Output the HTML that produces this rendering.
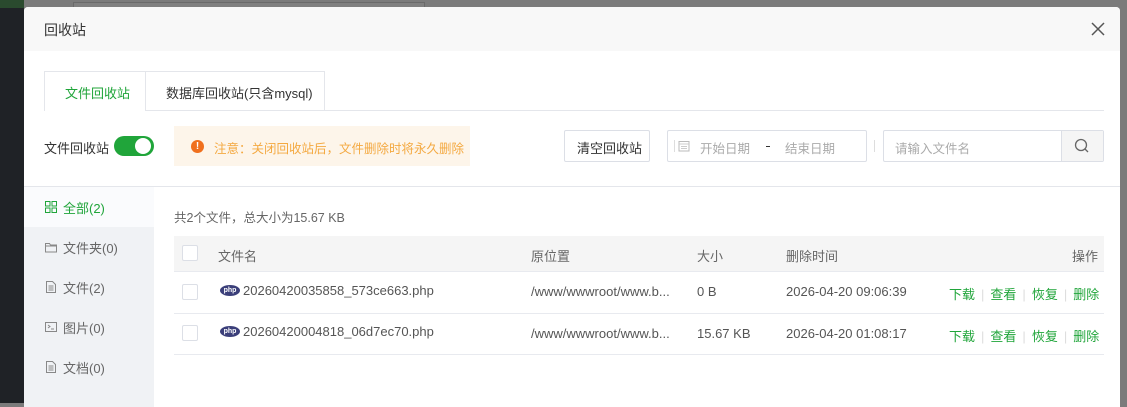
<!DOCTYPE html>
<html><head><meta charset="utf-8"><style>
*{margin:0;padding:0;box-sizing:border-box}
body{width:1127px;height:403px;overflow:hidden;background:#7b7b7b;font-family:"Liberation Sans","Noto Sans CJK SC",sans-serif;font-size:13px;color:#555;position:relative}
.abs{position:absolute}
.dlg{left:24px;top:7px;width:1096px;height:400px;background:#fff;border-radius:4px 4px 0 0;overflow:hidden}
.t{white-space:nowrap}
.sb{font-size:13px;color:#666}
.sep{color:#ddd;margin:0 6px}
</style></head><body>
<div class="abs" style="left:0;top:0;width:24px;height:403px;background:#1f2226"></div>
<div class="abs" style="left:0;top:0;width:24px;height:8px;background:#2a4a2e"></div>
<div class="abs" style="left:73px;top:2px;width:352px;height:6px;border:1px solid #6a6a6a;border-bottom:none;background:#808080"></div>
<div class="abs dlg">
  <div class="abs" style="left:0;top:0;width:1096px;height:44px;background:#f8f8f8"></div>
  <div class="abs t" style="left:20px;top:13px;font-size:14px;color:#333">回收站</div>
  <svg class="abs" style="left:1067px;top:15px" width="14" height="14" viewBox="0 0 14 14"><path d="M1 1L13 13M13 1L1 13" stroke="#555" stroke-width="1.5"/></svg>
  <div class="abs" style="left:20px;top:103px;width:1060px;height:1px;background:#e4e6eb"></div>
  <div class="abs" style="left:20px;top:64px;width:102px;height:40px;border:1px solid #e4e6eb;border-bottom:none;background:#fff"></div>
  <div class="abs" style="left:121px;top:64px;width:180px;height:40px;border:1px solid #e4e6eb;border-bottom:none"></div>
  <div class="abs t" style="left:41px;top:76px;font-size:13px;color:#20a53a">文件回收站</div>
  <div class="abs t" style="left:142px;top:76px;font-size:13px;color:#333">数据库回收站(只含mysql)</div>
  <div class="abs t" style="left:20px;top:131px;font-size:13px;color:#333">文件回收站</div>
  <div class="abs" style="left:90px;top:129px;width:40px;height:20px;border-radius:10px;background:#20a53a"></div>
  <div class="abs" style="left:111px;top:131px;width:16px;height:16px;border-radius:50%;background:#fff"></div>
  <div class="abs" style="left:150px;top:119px;width:296px;height:40px;background:#fdf5ea"></div>
  <div class="abs" style="left:167px;top:133px;width:13px;height:13px;border-radius:50%;background:#f0701e;color:#fff;font-size:10px;font-weight:bold;text-align:center;line-height:13px">!</div>
  <div class="abs t" style="left:190px;top:131px;font-size:12.5px;color:#f4a941">注意：关闭回收站后，文件删除时将永久删除</div>
  <div class="abs" style="left:540px;top:123px;width:86px;height:32px;border:1px solid #dcdfe6;border-radius:2px"></div>
  <div class="abs t" style="left:553px;top:131px;font-size:13px;color:#333">清空回收站</div>
  <div class="abs" style="left:650px;top:133px;width:1px;height:12px;background:#ddd"></div>
  <div class="abs" style="left:643px;top:123px;width:200px;height:32px;border:1px solid #dcdfe6;border-radius:2px"></div>
  <svg class="abs" style="left:654px;top:133px" width="12" height="12" viewBox="0 0 12 12"><rect x="1" y="1.5" width="10" height="9.5" fill="none" stroke="#bbb"/><path d="M1 4h10M3 6.5h6M3 8.5h6" stroke="#ccc"/></svg>
  <div class="abs t" style="left:676px;top:131px;font-size:12.5px;color:#aaa">开始日期</div>
  <div class="abs" style="left:742px;top:139px;width:4px;height:1px;background:#333"></div>
  <div class="abs t" style="left:761px;top:131px;font-size:12.5px;color:#aaa">结束日期</div>
  <div class="abs" style="left:850px;top:133px;width:1px;height:12px;background:#ddd"></div>
  <div class="abs" style="left:859px;top:123px;width:221px;height:32px;border:1px solid #dcdfe6;border-radius:2px"></div>
  <div class="abs" style="left:1037px;top:124px;width:42px;height:30px;background:#f5f5f5;border-left:1px solid #dcdfe6"></div>
  <svg class="abs" style="left:1050px;top:131px" width="16" height="16" viewBox="0 0 16 16"><circle cx="7" cy="7" r="5.5" fill="none" stroke="#666" stroke-width="1.3"/><path d="M11 11l3 3" stroke="#666" stroke-width="1.3"/></svg>
  <div class="abs t" style="left:871px;top:131px;font-size:12.5px;color:#aaa">请输入文件名</div>
  <div class="abs" style="left:0;top:179px;width:1096px;height:1px;background:#e4e6eb"></div>
  <div class="abs" style="left:0;top:180px;width:130px;height:220px;background:#f0f2f5"></div>
  <div class="abs" style="left:0;top:180px;width:130px;height:40px;background:#fafbfd"></div>
  <svg class="abs" style="left:21px;top:194px" width="12" height="12" viewBox="0 0 12 12" fill="none" stroke="#20a53a"><rect x=".5" y=".5" width="4.5" height="4.5"/><rect x="7" y=".5" width="4.5" height="4.5"/><rect x=".5" y="7" width="4.5" height="4.5"/><rect x="7" y="7" width="4.5" height="4.5"/></svg>
  <div class="abs t" style="left:39px;top:191px;font-size:13px;color:#20a53a">全部(2)</div>
  <svg class="abs" style="left:21px;top:234px" width="12" height="12" viewBox="0 0 12 12" fill="none" stroke="#888"><path d="M.5 2.5h4l1 1.5h6v7h-11z M.5 5h11"/></svg>
  <div class="abs t sb" style="left:39px;top:231px">文件夹(0)</div>
  <svg class="abs" style="left:21px;top:274px" width="12" height="12" viewBox="0 0 12 12" fill="none" stroke="#888"><path d="M1.5.5h6l3 3v8h-9z M3.5 5h5M3.5 7h5M3.5 9h5"/></svg>
  <div class="abs t sb" style="left:39px;top:271px">文件(2)</div>
  <svg class="abs" style="left:21px;top:314px" width="12" height="12" viewBox="0 0 12 12" fill="none" stroke="#888"><rect x=".5" y="1.5" width="11" height="9"/><path d="M3 4l2 1.5-2 1.5M6 8h3"/></svg>
  <div class="abs t sb" style="left:39px;top:311px">图片(0)</div>
  <svg class="abs" style="left:21px;top:354px" width="12" height="12" viewBox="0 0 12 12" fill="none" stroke="#888"><path d="M1.5.5h6l3 3v8h-9z M3.5 5h5M3.5 7h5M3.5 9h5"/></svg>
  <div class="abs t sb" style="left:39px;top:351px">文档(0)</div>
  <div class="abs t" style="left:150px;top:200px;color:#666;font-size:12.5px">共2个文件，总大小为15.67 KB</div>
  <div class="abs" style="left:150px;top:229px;width:930px;height:36px;background:#f5f5f5;border-bottom:1px solid #e8eaef"></div>
  <div class="abs" style="left:150px;top:306px;width:930px;height:1px;background:#e8eaef"></div>
  <div class="abs" style="left:150px;top:347px;width:930px;height:1px;background:#e8eaef"></div>
  <div class="abs" style="left:158px;top:238px;width:16px;height:16px;border:1px solid #dcdfe6;background:#fff;border-radius:2px"></div>
  <div class="abs" style="left:158px;top:277px;width:16px;height:16px;border:1px solid #dcdfe6;border-radius:2px"></div>
  <div class="abs" style="left:158px;top:318px;width:16px;height:16px;border:1px solid #dcdfe6;border-radius:2px"></div>
  <div class="abs t" style="left:194px;top:239px;color:#666">文件名</div>
  <div class="abs t" style="left:507px;top:239px;color:#666">原位置</div>
  <div class="abs t" style="left:673px;top:239px;color:#666">大小</div>
  <div class="abs t" style="left:762px;top:239px;color:#666">删除时间</div>
  <div class="abs t" style="left:1048px;top:239px;color:#666">操作</div>
  <div class="abs" style="left:196px;top:278px;width:20px;height:11px;border-radius:50%;background:#3b3f7a;color:#fff;font-size:7px;line-height:11px;text-align:center;font-weight:bold">php</div>
  <div class="abs" style="left:196px;top:319px;width:20px;height:11px;border-radius:50%;background:#3b3f7a;color:#fff;font-size:7px;line-height:11px;text-align:center;font-weight:bold">php</div>
  <div class="abs t" style="left:219px;top:276px;font-size:13px;color:#555">20260420035858_573ce663.php</div>
  <div class="abs t" style="left:219px;top:317px;font-size:13px;color:#555">20260420004818_06d7ec70.php</div>
  <div class="abs t" style="left:507px;top:277px">/www/wwwroot/www.b...</div>
  <div class="abs t" style="left:507px;top:319px">/www/wwwroot/www.b...</div>
  <div class="abs t" style="left:673px;top:277px">0 B</div>
  <div class="abs t" style="left:673px;top:319px">15.67 KB</div>
  <div class="abs t" style="left:762px;top:277px">2026-04-20 09:06:39</div>
  <div class="abs t" style="left:762px;top:319px">2026-04-20 01:08:17</div>
  <div class="abs t" style="left:925px;top:277px;color:#20a53a">下载<span class="sep">|</span>查看<span class="sep">|</span>恢复<span class="sep">|</span>删除</div>
  <div class="abs t" style="left:925px;top:319px;color:#20a53a">下载<span class="sep">|</span>查看<span class="sep">|</span>恢复<span class="sep">|</span>删除</div>
</div>
</body></html>
